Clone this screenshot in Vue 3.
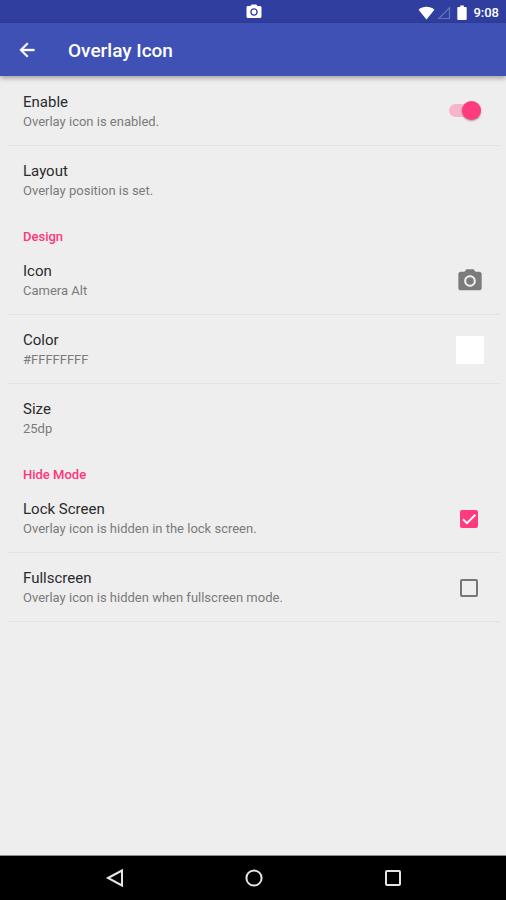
<script setup>
import { ref } from 'vue'

const enabled = ref(true)
const lockScreen = ref(true)
const fullscreen = ref(false)
const cameraPath =
  'M9 2 7.17 4H4c-1.1 0-2 .9-2 2v12c0 1.1.9 2 2 2h16c1.1 0 2-.9 2-2V6c0-1.1-.9-2-2-2h-3.17L15 2H9zm3 15c-2.76 0-5-2.24-5-5s2.24-5 5-5 5 2.24 5 5-2.24 5-5 5z'
</script>

<template>
  <div class="screen">
    <div class="status">
      <svg class="status-camera" viewBox="0 0 24 24" aria-hidden="true">
        <path :d="cameraPath" />
        <circle cx="12" cy="12" r="3.2" />
      </svg>
      <div class="status-right">
        <svg class="wifi" viewBox="0 0 18 14" aria-hidden="true">
          <path d="M9 14 .6 3.6C3 1.400 6 .5 9 .5s6 .9 8.400 3.100z" />
        </svg>
        <svg class="signal" viewBox="0 0 14 14" aria-hidden="true">
          <path d="M12.500 1.800v10.700H1.800z" />
        </svg>
        <svg class="battery" viewBox="0 0 10 16" aria-hidden="true">
          <path d="M3 .5h4V2h2q1 0 1 1v12q0 1-1 1H1q-1 0-1-1V3q0-1 1-1h2z" />
        </svg>
        <span class="clock">9:08</span>
      </div>
    </div>

    <header class="toolbar">
      <button class="back" type="button" aria-label="Back">
        <svg viewBox="0 0 24 24" aria-hidden="true">
          <path d="M20 11H7.830l5.590-5.590L12 4l-8 8 8 8 1.410-1.410L7.830 13H20v-2z" />
        </svg>
      </button>
      <h1>Overlay Icon</h1>
    </header>

    <main class="list">
      <label class="row divided">
        <span class="text">
          <span class="title">Enable</span>
          <span class="summary">Overlay icon is enabled.</span>
        </span>
        <input v-model="enabled" class="switch" type="checkbox" role="switch" />
      </label>
      <button class="row" type="button">
        <span class="text">
          <span class="title">Layout</span>
          <span class="summary">Overlay position is set.</span>
        </span>
      </button>

      <h2>Design</h2>
      <button class="row divided" type="button">
        <span class="text">
          <span class="title">Icon</span>
          <span class="summary">Camera Alt</span>
        </span>
        <svg class="widget camera" viewBox="0 0 24 24" aria-hidden="true">
          <path :d="cameraPath" />
          <circle cx="12" cy="12" r="3.2" />
        </svg>
      </button>
      <button class="row divided" type="button">
        <span class="text">
          <span class="title">Color</span>
          <span class="summary">#FFFFFFFF</span>
        </span>
        <span class="widget swatch"></span>
      </button>
      <button class="row" type="button">
        <span class="text">
          <span class="title">Size</span>
          <span class="summary">25dp</span>
        </span>
      </button>

      <h2>Hide Mode</h2>
      <label class="row divided">
        <span class="text">
          <span class="title">Lock Screen</span>
          <span class="summary">Overlay icon is hidden in the lock screen.</span>
        </span>
        <span class="check">
          <input v-model="lockScreen" type="checkbox" />
          <svg v-if="lockScreen" viewBox="0 0 18 18" aria-hidden="true">
            <path d="M3 9.200 7 13.200 15.300 4.800" />
          </svg>
        </span>
      </label>
      <label class="row divided">
        <span class="text">
          <span class="title">Fullscreen</span>
          <span class="summary">Overlay icon is hidden when fullscreen mode.</span>
        </span>
        <span class="check">
          <input v-model="fullscreen" type="checkbox" />
          <svg v-if="fullscreen" viewBox="0 0 18 18" aria-hidden="true">
            <path d="M3 9.200 7 13.200 15.300 4.800" />
          </svg>
        </span>
      </label>
    </main>

    <nav class="navbar">
      <button type="button" aria-label="Back">
        <svg viewBox="0 0 20 20" aria-hidden="true"><path d="M3 10 17 2.500v15z" /></svg>
      </button>
      <button type="button" aria-label="Home">
        <svg viewBox="0 0 20 20" aria-hidden="true"><circle cx="10" cy="10" r="7.600" /></svg>
      </button>
      <button type="button" aria-label="Recent apps">
        <svg viewBox="0 0 20 20" aria-hidden="true"><rect x="3" y="3" width="14" height="14" rx="1" /></svg>
      </button>
    </nav>
  </div>
</template>

<style>
body {
  margin: 0;
  background: #eee;
}
</style>

<style scoped>
.screen {
  display: flex;
  flex-direction: column;
  min-height: 100vh;
  background: #eee;
  font-family: Roboto, "Liberation Sans", sans-serif;
}

button {
  padding: 0;
  border: 0;
  background: none;
  color: inherit;
  font: inherit;
  text-align: left;
  cursor: pointer;
}

.status {
  display: grid;
  grid-template-columns: 1fr auto 1fr;
  align-items: center;
  height: 23px;
  padding-right: 7px;
  padding-left: 9px;
  background: #303f9f;
  color: #fff;
}

.status svg {
  fill: currentColor;
}

.status-camera {
  grid-column: 2;
  width: 18px;
  height: 18px;
}

.status-right {
  display: flex;
  align-items: center;
  justify-content: flex-end;
  padding-top: 2px;
}

.wifi {
  width: 17px;
  height: 14px;
  margin-right: 2px;
}

.status .signal {
  width: 14px;
  height: 14px;
  margin-right: 6px;
  fill: none;
  stroke: #6672b8;
  stroke-width: 1.2;
}

.battery {
  width: 10px;
  height: 15px;
  margin-right: 6px;
}

.clock {
  font-size: 13px;
  font-weight: 500;
  line-height: 16px;
}

.toolbar {
  display: flex;
  align-items: center;
  gap: 30px;
  height: 53px;
  padding: 0 16px;
  background: #3f51b5;
  box-shadow: 0 2px 5px rgba(0, 0, 0, 0.35);
  color: #fff;
}

.back {
  width: 22px;
  height: 22px;
}

.back svg {
  display: block;
  width: 22px;
  height: 22px;
  fill: currentColor;
  stroke: currentColor;
  stroke-width: 0.5;
}

h1 {
  margin: 0;
  padding-top: 2px;
  font-size: 19px;
  font-weight: 500;
  line-height: 24px;
}

.list {
  display: flex;
  flex: 1;
  flex-direction: column;
  padding: 1px 6px 0 8px;
}

.row {
  display: flex;
  align-items: center;
  justify-content: space-between;
  padding: 15px 16px 14px 15px;
  cursor: pointer;
}

.divided {
  border-bottom: 1px solid #e2e2e2;
}

.text {
  display: flex;
  flex-direction: column;
}

.title {
  color: #2b2b2b;
  font-size: 15px;
  line-height: 21px;
}

.summary {
  color: #7b7b7b;
  font-size: 13px;
  line-height: 18px;
}

h2 {
  margin: 0;
  padding: 15px 15px 1px;
  color: #ff357b;
  font-size: 13px;
  font-weight: 500;
  line-height: 16px;
}

.widget {
  width: 28px;
  height: 28px;
}

.camera {
  fill: #7b7b7b;
}

.swatch {
  background: #fff;
}

input {
  margin: 0;
  appearance: none;
  cursor: pointer;
}

.switch {
  display: flex;
  align-items: center;
  width: 32px;
  height: 13px;
  margin-right: 3px;
  margin-bottom: 2px;
  border-radius: 7px;
  background: #bdbdbd;
}

.switch::before {
  width: 19px;
  height: 19px;
  border-radius: 50%;
  background: #fafafa;
  box-shadow: 0 1px 2px rgba(0, 0, 0, 0.35);
  content: "";
}

.switch:checked {
  justify-content: flex-end;
  background: #f6b5cb;
}

.switch:checked::before {
  background: #ff3b7e;
}

.check {
  display: grid;
  margin-right: 6px;
}

.check input,
.check svg {
  grid-area: 1 / 1;
  box-sizing: border-box;
  width: 18px;
  height: 18px;
}

.check input {
  border: 2px solid #757575;
  border-radius: 2px;
}

.check input:checked {
  border-color: #ff3b7e;
  background: #ff3b7e;
}

.check svg {
  fill: none;
  stroke: #fff;
  stroke-width: 2;
  pointer-events: none;
}

.navbar {
  display: flex;
  justify-content: center;
  height: 44px;
  padding-left: 2px;
  border-top: 1px solid #8c8c8c;
  background: #000;
}

.navbar button {
  display: grid;
  flex: 0 1 139px;
  place-items: center;
}

.navbar svg {
  width: 20px;
  height: 20px;
  fill: none;
  stroke: #e4e4e4;
  stroke-width: 2;
}
</style>
